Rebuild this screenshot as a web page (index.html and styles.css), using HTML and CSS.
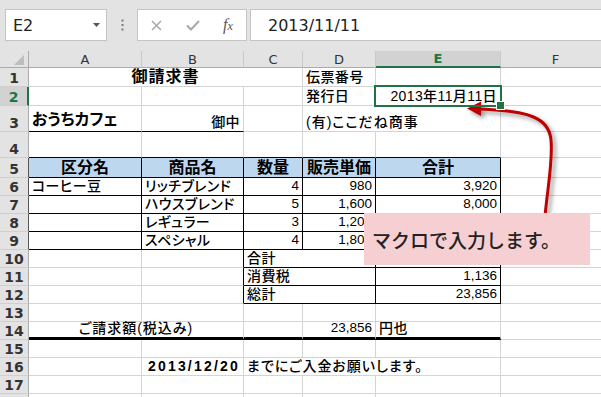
FILE: index.html
```html
<!DOCTYPE html>
<html lang="ja">
<head>
  <meta charset="UTF-8">
  <meta name="viewport" content="width=device-width, initial-scale=1.0">
  <title>御請求書</title>
  <link rel="stylesheet" href="styles.css">
</head>
<body>
  <div class="app">
    <!-- 数式バー -->
    <div class="formula-bar">
      <div class="name-box">
        <span>E2</span>
        <svg class="caret" width="7" height="4" viewBox="0 0 7 4"><path d="M0 0h7L3.5 4z" fill="#555"/></svg>
      </div>
      <div class="grip">
        <svg width="3" height="12" viewBox="0 0 3 12">
          <rect x="0.5" y="0.5" width="2" height="2" fill="#7a7a7a"/>
          <rect x="0.5" y="5" width="2" height="2" fill="#7a7a7a"/>
          <rect x="0.5" y="9.5" width="2" height="2" fill="#7a7a7a"/>
        </svg>
      </div>
      <div class="fx-tools">
        <svg class="cancel" width="11" height="11" viewBox="0 0 11 11"><path d="M1 1l9 9M10 1l-9 9" stroke="#a8a8a8" stroke-width="1.5"/></svg>
        <svg class="enter" width="14" height="11" viewBox="0 0 14 11"><path d="M1 5.5l4 4L13 1" fill="none" stroke="#a8a8a8" stroke-width="2"/></svg>
        <span class="fx">f<span class="fx-x">x</span></span>
      </div>
      <div class="formula-input">2013/11/11</div>
    </div>

    <!-- シート -->
    <div class="sheet">
      <div class="corner"><svg width="10" height="10" viewBox="0 0 10 10"><path d="M10 0v10H0z" fill="#bdbdbd"/></svg></div>
      <div class="col-h">A</div>
      <div class="col-h">B</div>
      <div class="col-h">C</div>
      <div class="col-h">D</div>
      <div class="col-h sel">E</div>
      <div class="col-h">F</div>

      <div class="row-h">1</div>
      <div class="c span3 center title">御請求書</div>
      <div class="c">伝票番号</div>
      <div class="c"></div>
      <div class="c"></div>

      <div class="row-h sel">2</div>
      <div class="c"></div>
      <div class="c"></div>
      <div class="c"></div>
      <div class="c">発行日</div>
      <div class="c right active">2013年11月11日</div>
      <div class="c"></div>

      <div class="row-h">3</div>
      <div class="c bb shop">おうちカフェ</div>
      <div class="c bb right">御中</div>
      <div class="c"></div>
      <div class="c span2 wide">(有)ここだね商事</div>
      <div class="c"></div>

      <div class="row-h">4</div>
      <div class="c bb"></div>
      <div class="c bb"></div>
      <div class="c bb"></div>
      <div class="c bb"></div>
      <div class="c bb"></div>
      <div class="c"></div>

      <div class="row-h br">5</div>
      <div class="c bb br head">区分名</div>
      <div class="c bb br head">商品名</div>
      <div class="c bb br head">数量</div>
      <div class="c bb br head">販売単価</div>
      <div class="c bb br head">合計</div>
      <div class="c"></div>

      <div class="row-h br">6</div>
      <div class="c bb br">コーヒー豆</div>
      <div class="c bb br">リッチブレンド</div>
      <div class="c bb br right num">4</div>
      <div class="c bb br right num">980</div>
      <div class="c bb br right num">3,920</div>
      <div class="c"></div>

      <div class="row-h br">7</div>
      <div class="c bb br"></div>
      <div class="c bb br">ハウスブレンド</div>
      <div class="c bb br right num">5</div>
      <div class="c bb br right num">1,600</div>
      <div class="c bb br right num">8,000</div>
      <div class="c"></div>

      <div class="row-h br">8</div>
      <div class="c bb br"></div>
      <div class="c bb br">レギュラー</div>
      <div class="c bb br right num">3</div>
      <div class="c bb br right num">1,200</div>
      <div class="c bb br right num">3,600</div>
      <div class="c"></div>

      <div class="row-h br">9</div>
      <div class="c bb br"></div>
      <div class="c bb br">スペシャル</div>
      <div class="c bb br right num">4</div>
      <div class="c bb br right num">1,800</div>
      <div class="c bb br right num">7,200</div>
      <div class="c"></div>

      <div class="row-h">10</div>
      <div class="c"></div>
      <div class="c br"></div>
      <div class="c span2 bb br">合計</div>
      <div class="c bb br right num">22,720</div>
      <div class="c"></div>

      <div class="row-h">11</div>
      <div class="c"></div>
      <div class="c br"></div>
      <div class="c span2 bb br">消費税</div>
      <div class="c bb br right num">1,136</div>
      <div class="c"></div>

      <div class="row-h">12</div>
      <div class="c"></div>
      <div class="c br"></div>
      <div class="c span2 bb br">総計</div>
      <div class="c bb br right num">23,856</div>
      <div class="c"></div>

      <div class="row-h">13</div>
      <div class="c"></div>
      <div class="c"></div>
      <div class="c"></div>
      <div class="c"></div>
      <div class="c"></div>
      <div class="c"></div>

      <div class="row-h">14</div>
      <div class="c span2 tb center wide">ご請求額(税込み)</div>
      <div class="c tb"></div>
      <div class="c tb right num">23,856</div>
      <div class="c tb">円也</div>
      <div class="c"></div>

      <div class="row-h">15</div>
      <div class="c"></div>
      <div class="c"></div>
      <div class="c"></div>
      <div class="c"></div>
      <div class="c"></div>
      <div class="c"></div>

      <div class="row-h">16</div>
      <div class="c"></div>
      <div class="c right due">2013/12/20</div>
      <div class="c span3 wide">までにご入金お願いします。</div>
      <div class="c"></div>

      <div class="row-h">17</div>
      <div class="c"></div>
      <div class="c"></div>
      <div class="c"></div>
      <div class="c"></div>
      <div class="c"></div>
      <div class="c"></div>

      <div class="row-h"></div>
      <div class="c"></div>
      <div class="c"></div>
      <div class="c"></div>
      <div class="c"></div>
      <div class="c"></div>
      <div class="c"></div>
    </div>

    <!-- 吹き出しと矢印 -->
    <svg class="arrow" width="601" height="397" viewBox="0 0 601 397">
      <g class="arrow-shape">
        <path d="M545 216C548 185 553 160 551 140C549 118 530 111 480 109" fill="none" stroke="#c00000" stroke-width="3"/>
        <path d="M467 108.5L481 101.5L481 116z" fill="#c00000"/>
      </g>
    </svg>
    <div class="callout">マクロで入力します。</div>
  </div>
</body>
</html>
```

FILE: styles.css
```css
* {
  box-sizing: border-box;
}
body {
  margin: 0;
  background: #fff;
  font-family: "Liberation Sans", "Noto Sans CJK JP", sans-serif;
}
.app {
  position: relative;
  width: 601px;
  height: 397px;
  overflow: hidden;
  background: #e3e3e3;
}

/* 数式バー */
.formula-bar {
  display: flex;
  height: 51px;
  padding: 9px 0 10px 5px;
}
.name-box {
  width: 102px;
  display: flex;
  align-items: center;
  justify-content: space-between;
  padding: 0 6px 0 7px;
  background: #fff;
  border: 1px solid #c4c4c4;
  font: 16px "DejaVu Sans", sans-serif;
  color: #222;
}
.grip {
  width: 30px;
  display: flex;
  align-items: center;
  justify-content: center;
}
.fx-tools {
  width: 110px;
  display: flex;
  align-items: center;
  padding-left: 13px;
  background: #fff;
  border: 1px solid #c4c4c4;
}
.enter {
  margin-left: 24px;
}
.fx {
  margin-left: 23px;
  font: italic 16px "Liberation Serif", serif;
  color: #555;
}
.fx-x {
  font-size: 12px;
}
.formula-input {
  flex: 1;
  margin-left: 3px;
  display: flex;
  align-items: center;
  padding-left: 17px;
  background: #fff;
  border: 1px solid #c4c4c4;
  border-right: none;
  font: 16px "DejaVu Sans", sans-serif;
  color: #222;
}

/* シート */
.sheet {
  display: grid;
  grid-template-columns: 29px 113px 102px 59px 73px 125px 110px;
  grid-template-rows: 17px 19px 19px 26px 26px 20px repeat(13, 18px);
  background: #fff;
}
.corner {
  display: flex;
  align-items: flex-end;
  justify-content: flex-end;
  padding: 0 4px 2px 0;
  background: #e3e3e3;
  border-right: 1px solid #ababab;
  border-bottom: 1px solid #ababab;
}
.col-h {
  display: flex;
  align-items: center;
  justify-content: center;
  background: #e3e3e3;
  border-right: 1px solid #c9c9c9;
  border-bottom: 1px solid #ababab;
  font: 13px "DejaVu Sans", sans-serif;
  color: #333;
}
.row-h {
  display: flex;
  align-items: flex-end;
  justify-content: center;
  background: #e3e3e3;
  border-right: 1px solid #ababab;
  border-bottom: 1px solid #cfcfcf;
  font: bold 14px/16px "DejaVu Sans", sans-serif;
  color: #333;
}
.col-h.sel {
  background: #d2d2d2;
  color: #217346;
  font-weight: bold;
  border-bottom: 2px solid #217346;
}
.row-h.sel {
  background: #d2d2d2;
  color: #217346;
  border-right: 2px solid #217346;
}
.c {
  display: flex;
  align-items: flex-end;
  padding: 0 3px 1px;
  border-right: 1px solid #d4d4d4;
  border-bottom: 1px solid #d4d4d4;
  font-size: 14px;
  font-weight: 500;
  line-height: 16px;
  letter-spacing: 0.4px;
  white-space: nowrap;
  font-feature-settings: "palt";
  color: #000;
}
.span2 {
  grid-column: span 2;
}
.span3 {
  grid-column: span 3;
}
.center {
  justify-content: center;
}
.right {
  justify-content: flex-end;
}
.bb {
  border-bottom-color: #000;
}
.br {
  border-right-color: #000;
}
.row-h.br {
  border-right-color: #555;
}
.tb {
  border-bottom: 3px solid #000;
}
.wide {
  letter-spacing: 1px;
}
.title {
  font-size: 16px;
  font-weight: bold;
  letter-spacing: 1px;
}
.shop {
  font-size: 16px;
  font-weight: bold;
  letter-spacing: 0;
  padding-bottom: 3px;
}
.head {
  justify-content: center;
  background: #bdd7ee;
  font-size: 16px;
  font-weight: bold;
  letter-spacing: 0;
}
.num {
  font-size: 13.5px;
  letter-spacing: 0;
}
.due {
  font-weight: bold;
  letter-spacing: 2.2px;
}
.active {
  position: relative;
  z-index: 1;
}
.active::after {
  content: "";
  position: absolute;
  left: -2px;
  top: -2px;
  right: -2px;
  bottom: -2px;
  border: 2px solid #217346;
}
.active::before {
  content: "";
  position: absolute;
  right: -5px;
  bottom: -5px;
  width: 7px;
  height: 7px;
  background: #217346;
  border: 1px solid #fff;
  z-index: 2;
}

/* 吹き出し */
.arrow {
  position: absolute;
  left: 0;
  top: 0;
  pointer-events: none;
}
.arrow-shape {
  filter: drop-shadow(3px 3px 2px rgba(0, 0, 0, 0.4));
}
.callout {
  position: absolute;
  left: 364px;
  top: 213px;
  width: 226px;
  height: 52px;
  display: flex;
  align-items: center;
  padding-left: 8px;
  background: #f6cfd2;
  font: 500 19px "Noto Sans CJK JP", sans-serif;
  color: #222;
}
```
